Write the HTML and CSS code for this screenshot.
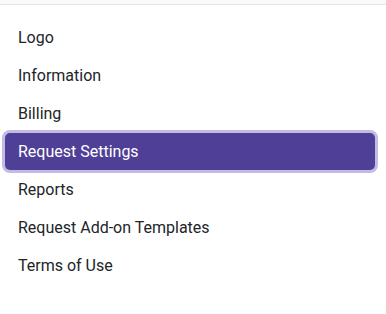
FILE: index.html
```html
<!DOCTYPE html>
<html>
<head>
<meta charset="utf-8">
<link rel="stylesheet" href="styles.css">
</head>
<body>
<div class="topbar"></div>
<nav class="menu">
  <a class="item">Logo</a>
  <a class="item">Information</a>
  <a class="item">Billing</a>
  <a class="item active">Request Settings</a>
  <a class="item">Reports</a>
  <a class="item">Request Add-on Templates</a>
  <a class="item">Terms of Use</a>
</nav>
</body>
</html>
```
FILE: styles.css
```css
html, body {
  margin: 0;
  padding: 0;
  background: #ffffff;
}
body {
  font-family: Roboto, "Noto Sans", sans-serif;
  font-size: 16px;
  color: #212529;
}
.topbar {
  height: 4px;
  background: #f8f9fa;
  border-bottom: 1px solid #e3e6ea;
}
.menu {
  display: flex;
  flex-direction: column;
  padding: 14px 11px 0 5px;
}
.item {
  display: block;
  height: 38px;
  line-height: 37px;
  padding: 0 13px;
  border-radius: 5px;
  color: #212529;
  text-decoration: none;
}
.item.active {
  height: 37px;
  margin-bottom: 1px;
  background: #4f3f96;
  color: #ffffff;
  box-shadow: 0 0 0 3px #c2bbe6;
}
```
